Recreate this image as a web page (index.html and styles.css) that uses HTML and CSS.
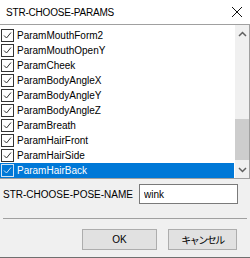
FILE: index.html
```html
<!DOCTYPE html>
<html lang="ja">
<head>
  <meta charset="UTF-8">
  <title>STR-CHOOSE-PARAMS</title>
  <link rel="stylesheet" href="styles.css">
</head>
<body>
  <div class="dialog">
    <div class="titlebar">
      <span class="title">STR-CHOOSE-PARAMS</span>
      <svg class="close" width="12" height="12" viewBox="0 0 12 12"><path d="M1 1L11 11M11 1L1 11" stroke="#111" stroke-width="1" fill="none"/></svg>
    </div>

    <div class="listbox">
      <ul class="items">
        <li class="item"><span class="check"><svg width="11" height="11" viewBox="0 0 11 11"><path d="M2 5.5L4.5 8L9 2.5" /></svg></span>ParamMouthForm2</li>
        <li class="item"><span class="check"><svg width="11" height="11" viewBox="0 0 11 11"><path d="M2 5.5L4.5 8L9 2.5" /></svg></span>ParamMouthOpenY</li>
        <li class="item"><span class="check"><svg width="11" height="11" viewBox="0 0 11 11"><path d="M2 5.5L4.5 8L9 2.5" /></svg></span>ParamCheek</li>
        <li class="item"><span class="check"><svg width="11" height="11" viewBox="0 0 11 11"><path d="M2 5.5L4.5 8L9 2.5" /></svg></span>ParamBodyAngleX</li>
        <li class="item"><span class="check"><svg width="11" height="11" viewBox="0 0 11 11"><path d="M2 5.5L4.5 8L9 2.5" /></svg></span>ParamBodyAngleY</li>
        <li class="item"><span class="check"><svg width="11" height="11" viewBox="0 0 11 11"><path d="M2 5.5L4.5 8L9 2.5" /></svg></span>ParamBodyAngleZ</li>
        <li class="item"><span class="check"><svg width="11" height="11" viewBox="0 0 11 11"><path d="M2 5.5L4.5 8L9 2.5" /></svg></span>ParamBreath</li>
        <li class="item"><span class="check"><svg width="11" height="11" viewBox="0 0 11 11"><path d="M2 5.5L4.5 8L9 2.5" /></svg></span>ParamHairFront</li>
        <li class="item"><span class="check"><svg width="11" height="11" viewBox="0 0 11 11"><path d="M2 5.5L4.5 8L9 2.5" /></svg></span>ParamHairSide</li>
        <li class="item selected"><span class="check"><svg width="11" height="11" viewBox="0 0 11 11"><path d="M2 5.5L4.5 8L9 2.5" /></svg></span>ParamHairBack</li>
      </ul>
      <div class="scrollbar">
        <div class="arrow"><svg width="9" height="6" viewBox="0 0 9 6"><path d="M1 5L4.5 1.5L8 5" /></svg></div>
        <div class="track"><div class="thumb"></div></div>
        <div class="arrow"><svg width="9" height="6" viewBox="0 0 9 6"><path d="M1 1L4.5 4.5L8 1" /></svg></div>
      </div>
    </div>

    <div class="name-row">
      <label for="poseName">STR-CHOOSE-POSE-NAME</label>
      <input id="poseName" type="text" value="wink">
    </div>

    <div class="separator"></div>

    <div class="buttons">
      <button class="btn">OK</button>
      <button class="btn jp">キャンセル</button>
    </div>
  </div>
</body>
</html>
```

FILE: styles.css
```css
html, body {
  margin: 0;
  padding: 0;
}
body {
  font-family: 'Liberation Sans', Arial, 'Noto Sans CJK JP', sans-serif;
  font-size: 10px;
  color: #000000;
}
.dialog {
  width: 250px;
  height: 258px;
  box-sizing: border-box;
  background-color: #f0f0f0;
  border-bottom: 1px solid #6f6f6f;
  display: flex;
  flex-direction: column;
}
.titlebar {
  height: 24px;
  background-color: #ffffff;
  display: flex;
  align-items: center;
  justify-content: space-between;
  padding: 0 7px 0 6px;
}
.title {
  font-size: 10px;
  letter-spacing: -0.2px;
}
.listbox {
  display: flex;
  background-color: #ffffff;
  border-top: 1px solid #a0a0a0;
  border-bottom: 1px solid #a0a0a0;
  border-right: 1px solid #a0a0a0;
  height: 155px;
  box-sizing: border-box;
}
.items {
  list-style: none;
  margin: 0;
  padding: 3px 0 0 0;
  flex: 1;
}
.item {
  height: 15px;
  display: flex;
  align-items: center;
  margin-right: 1px;
}
.check {
  width: 13px;
  height: 13px;
  box-sizing: border-box;
  border: 1px solid #333333;
  margin: 0 3px 0 1px;
  display: flex;
}
.check svg path {
  fill: none;
  stroke: #333333;
  stroke-width: 1;
}
.selected {
  background-color: #0078d7;
  color: #ffffff;
}
.selected .check {
  border-color: #cfe3f5;
}
.selected .check svg path {
  stroke: #cfe3f5;
}
.scrollbar {
  width: 14px;
  background-color: #f0f0f0;
  display: flex;
  flex-direction: column;
}
.arrow {
  height: 17px;
  display: flex;
  align-items: center;
  justify-content: center;
}
.arrow svg path {
  fill: none;
  stroke: #606060;
  stroke-width: 1.5;
}
.track {
  flex: 1;
  display: flex;
  flex-direction: column;
  justify-content: flex-end;
  padding-bottom: 1px;
}
.thumb {
  height: 41px;
  background-color: #cdcdcd;
}
.name-row {
  display: flex;
  align-items: center;
  justify-content: space-between;
  margin-top: 5px;
  padding: 0 12px 0 3px;
}
.name-row input {
  width: 99px;
  height: 20px;
  box-sizing: border-box;
  border: 1px solid #7a7a7a;
  background-color: #ffffff;
  font-family: 'Liberation Sans', Arial, sans-serif;
  font-size: 10px;
  padding: 0 4px;
  margin: 0;
}
.separator {
  height: 1px;
  background-color: #a0a0a0;
  margin: 14px 3px 0 3px;
}
.buttons {
  display: flex;
  justify-content: flex-end;
  gap: 11px;
  margin-top: 10px;
  padding-right: 13px;
}
.btn {
  width: 75px;
  height: 21px;
  background-color: #e1e1e1;
  border: 1px solid #adadad;
  font-family: 'Liberation Sans', Arial, 'Noto Sans CJK JP', sans-serif;
  font-size: 10px;
  color: #000000;
  padding: 0;
  margin: 0;
}
.btn.jp {
  width: 69px;
  letter-spacing: -1.5px;
}
```
